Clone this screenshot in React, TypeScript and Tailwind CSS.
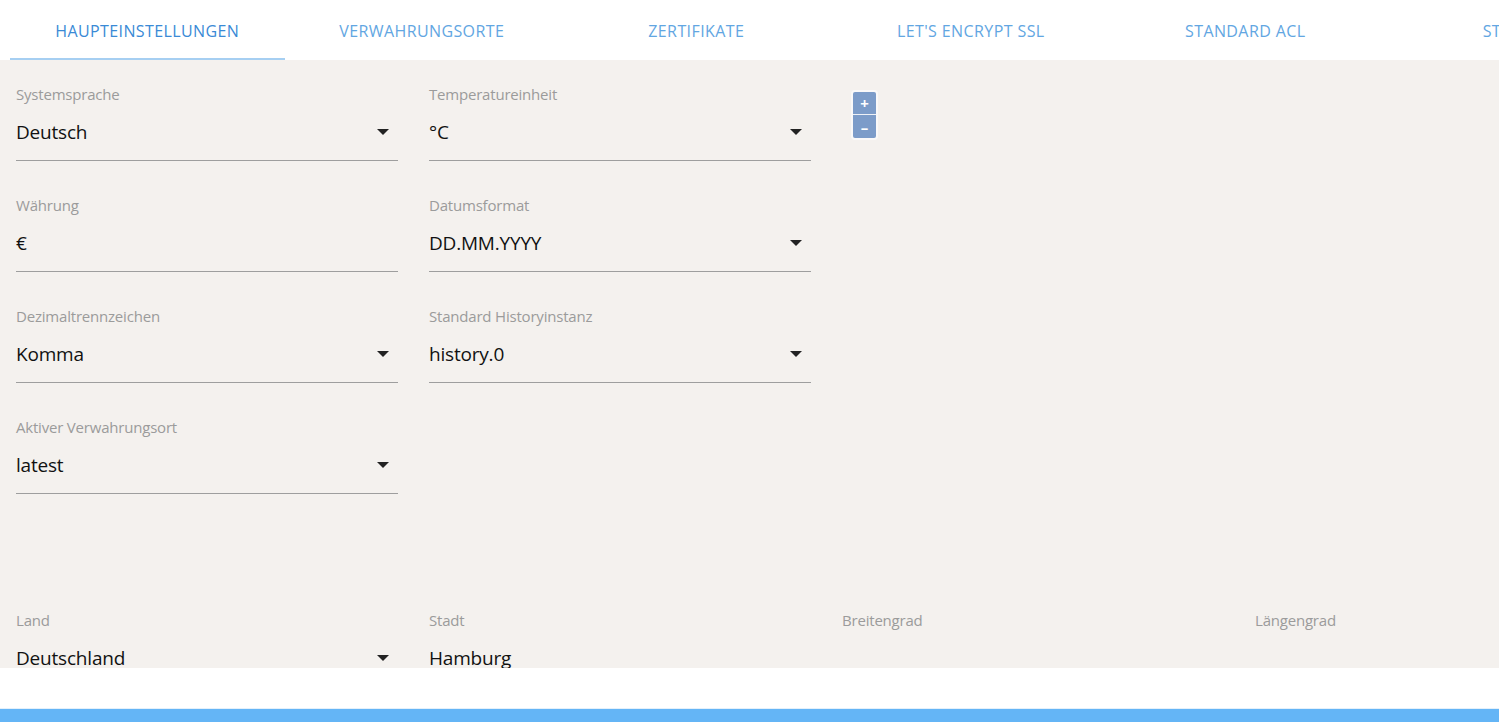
import React from 'react';

const FONT = { fontFamily: '"Open Sans", "Noto Sans", Arial, sans-serif' };

const TABS = ['HAUPTEINSTELLUNGEN', 'VERWAHRUNGSORTE', 'ZERTIFIKATE', "LET'S ENCRYPT SSL", 'STANDARD ACL', 'STATISTIKEN'];

function Arrow() {
  return (
    <svg width="12" height="6" viewBox="0 0 12 6" className="shrink-0">
      <path d="M0 0 L12 0 L6 6 Z" fill="#222" />
    </svg>
  );
}

type FieldProps = { label: string; value: string; select?: boolean; noLine?: boolean };

function Field({ label, value, select = true, noLine = false }: FieldProps) {
  return (
    <div className="w-[382px] shrink-0">
      <div className="h-[20px] leading-[20px] text-[15px] text-[#9b9b9b] tracking-[-0.2px]">{label}</div>
      <div
        className={`mt-[14px] flex items-center justify-between pr-[9px] pb-[14px] ${noLine ? '' : 'border-b border-[#9e9e9e]'}`}
      >
        <span className="h-[28px] leading-[28px] text-[19px] text-[#111] tracking-[-0.2px]">{value}</span>
        {select && <Arrow />}
      </div>
    </div>
  );
}

export default function App() {
  return (
    <div className="h-[722px] w-full flex flex-col bg-white overflow-hidden" style={FONT}>
      {/* Tabs */}
      <div className="h-[60px] shrink-0 flex pl-[10px] overflow-hidden bg-white">
        {TABS.map((t, i) => (
          <div
            key={t}
            className={`w-[274.5px] shrink-0 flex items-center justify-center text-[16px] tracking-[0.4px] ${
              i === 0 ? 'text-[#3a8ad6] border-b-2 border-[#a6cff2]' : 'text-[#62a6e2] border-b-2 border-transparent'
            } ${i === TABS.length - 1 ? 'pl-[24px]' : ''}`}
          >
            <span className="pt-[4px]">{t}</span>
          </div>
        ))}
      </div>

      {/* Content */}
      <div className="h-[608px] shrink-0 bg-[#f4f1ee] overflow-hidden pl-[16px] pt-[24px]">
        <div className="flex gap-[31px]">
          <div className="flex flex-col gap-[34px] shrink-0">
            <Field label="Systemsprache" value="Deutsch" />
            <Field label="Währung" value="€" select={false} />
            <Field label="Dezimaltrennzeichen" value="Komma" />
            <Field label="Aktiver Verwahrungsort" value="latest" />
          </div>
          <div className="flex flex-col gap-[34px] shrink-0">
            <Field label="Temperatureinheit" value="°C" />
            <Field label="Datumsformat" value="DD.MM.YYYY" />
            <Field label="Standard Historyinstanz" value="history.0" />
          </div>
          {/* Map */}
          <div className="relative flex-1 h-[480px]">
            <div className="absolute left-[9px] top-[6px] flex flex-col rounded-[4px] border-2 border-[#fbfbfb]/80 overflow-hidden">
              <button className="w-[23px] h-[23px] bg-[#7c9cc9] text-white text-[15px] leading-[20px] font-bold border-b border-[#eef1f6]">
                +
              </button>
              <button className="w-[23px] h-[23px] bg-[#7c9cc9] text-white text-[15px] leading-[20px] font-bold">
                –
              </button>
            </div>
          </div>
        </div>

        <div className="flex gap-[31px] mt-[46px]">
          <Field label="Land" value="Deutschland" />
          <Field label="Stadt" value="Hamburg" select={false} />
          <Field label="Breitengrad" value="" select={false} />
          <Field label="Längengrad" value="" select={false} />
        </div>
      </div>

      <div className="flex-1 bg-white" />
      <div className="h-[14px] shrink-0 bg-[#64b5f6] border-t border-[#e3f0fb]" />
    </div>
  );
}
